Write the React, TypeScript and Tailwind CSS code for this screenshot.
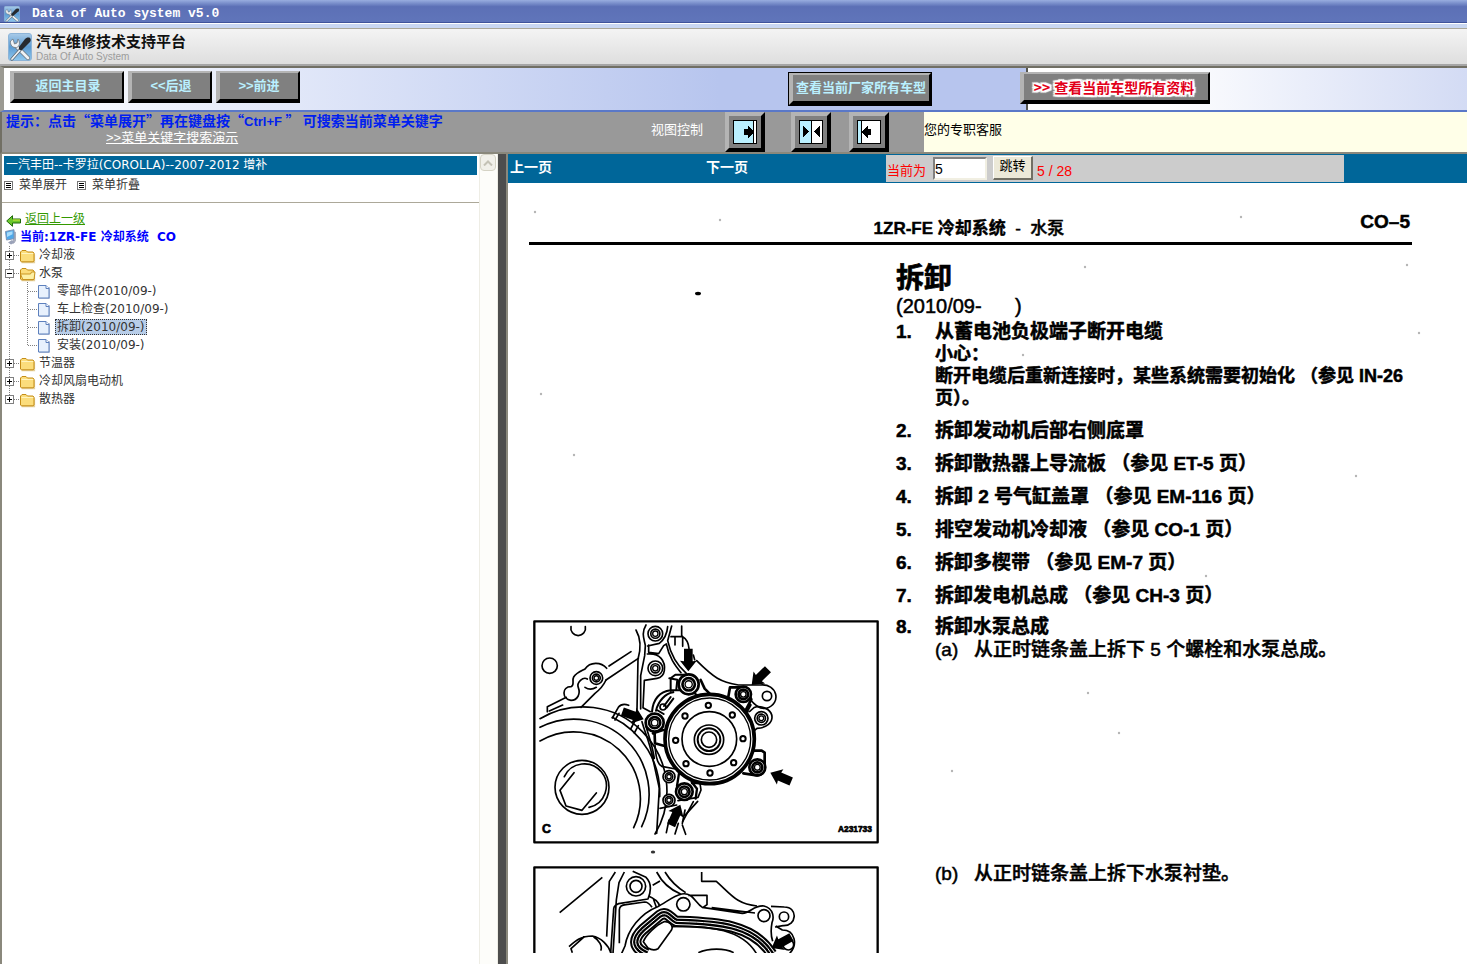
import React from "react";

const SANS = "font-['Liberation_Sans','Noto_Sans_CJK_SC',sans-serif]";
const TREE = "font-['DejaVu_Sans','Noto_Sans_CJK_SC',sans-serif]";

function ToolsLogo({ className }: { className: string }) {
  return (
    <svg viewBox="0 0 24 28" className={className} preserveAspectRatio="none" aria-hidden="true">
      <defs>
        <linearGradient id="tile" x1="0" y1="0" x2="0" y2="1">
          <stop offset="0" stopColor="#a9cbe9" />
          <stop offset="0.5" stopColor="#5c9bd2" />
          <stop offset="1" stopColor="#8fc8ee" />
        </linearGradient>
      </defs>
      <rect x="0.5" y="0.5" width="23" height="27" rx="2.5" fill="url(#tile)" stroke="#8db4d8" />
      <path d="M7 12 20 25" stroke="#6d7780" strokeWidth="4.2" strokeLinecap="round" />
      <path d="M7 12 20 25" stroke="#f1f3f5" strokeWidth="2.8" strokeLinecap="round" />
      <path d="M2.500 8c-.5 4 2 7 6 6.500 3-1 4-4.500 1.500-8.500L9 10l-2.500 1L5 6z" fill="#f1f3f5" stroke="#6d7780" strokeWidth="0.8" />
      <path d="M12 17 4 26" stroke="#59636d" strokeWidth="3.2" strokeLinecap="round" />
      <path d="M12 17 4 26" stroke="#eef2f5" strokeWidth="1.800" strokeLinecap="round" />
      <path d="M22 5c-2-1-4 0-5 1l-6 8c-1 2 1 4 3 3l8-8c1-1 1-3 0-4z" fill="#262a30" />
    </svg>
  );
}

function BevelButton({ children, className = "" }: { children: React.ReactNode; className?: string }) {
  return (
    <button
      type="button"
      className={`flex h-8 shrink-0 items-center justify-center border-t-2 border-r-2 border-b-4 border-l-4 border-t-[#b4b4b4] border-r-black border-b-black border-l-[#b4b4b4] bg-[#808080] text-[13px] leading-4 font-bold whitespace-nowrap text-[#baf0ff] ${className}`}
    >
      {children}
    </button>
  );
}

function ViewButton({ label, className = "", children }: { label: string; className?: string; children: React.ReactNode }) {
  return (
    <button
      type="button"
      aria-label={label}
      className={`flex h-10 w-10 shrink-0 items-center justify-center border-4 border-t-[#b4b4b4] border-r-black border-b-black border-l-[#b4b4b4] bg-[#808080] ${className}`}
    >
      <svg viewBox="0 0 24 24" className="h-6 w-6 shrink-0" shapeRendering="crispEdges">
        <rect x="0.5" y="0.5" width="23" height="23" fill="#fff" stroke="#000" />
        {children}
      </svg>
    </button>
  );
}

function Folder({ open }: { open: boolean }) {
  return (
    <g transform="translate(20 3)">
      <path d="M1 13.5 1 3.5 2.5 2h4L8 3.5h5.5L14.5 5v8.5z" fill="#c9a13a" transform="translate(0.6 0.8)" opacity="0.5" />
      <path d="M0.5 12V3L2 1.5h4L7.5 3H13l1 1.2V12l-.8.8H1.3z" fill="#fbdd7c" stroke="#c58d17" />
      {open ? (
        <path d="M0.5 7h10l1-2h3.5L14 12.5H2.8z" fill="#fdf0a5" stroke="#c58d17" strokeWidth="0.9" />
      ) : (
        <path d="M1.5 4.5h11.7" stroke="#fff4bf" />
      )}
    </g>
  );
}

type Node = { label: string; kind: "closed" | "open" | "leaf"; selected?: boolean; last?: boolean };

const NODES: Node[] = [
  { label: "冷却液", kind: "closed" },
  { label: "水泵", kind: "open" },
  { label: "零部件(2010/09-)", kind: "leaf" },
  { label: "车上检查(2010/09-)", kind: "leaf" },
  { label: "拆卸(2010/09-)", kind: "leaf", selected: true },
  { label: "安装(2010/09-)", kind: "leaf", last: true },
  { label: "节温器", kind: "closed" },
  { label: "冷却风扇电动机", kind: "closed" },
  { label: "散热器", kind: "closed", last: true },
];

function TreeRow({ node }: { node: Node }) {
  const leaf = node.kind === "leaf";
  const dots = { stroke: "#808080", strokeDasharray: "1 1", shapeRendering: "crispEdges" as const };
  return (
    <li className="flex h-[18px] items-center">
      <svg viewBox={leaf ? "0 0 55 18" : "0 0 37 18"} className={leaf ? "h-[18px] w-[55px] shrink-0" : "h-[18px] w-[37px] shrink-0"}>
        <path d={!leaf && node.last ? "M9.5 0V9" : "M9.5 0V18"} {...dots} />
        {leaf ? (
          <>
            <path d={node.last ? "M27.5 0V10" : "M27.5 0V18"} {...dots} />
            <path d="M28 9.5H38" {...dots} />
            <path d="M39 5h11v12h-11z" fill="#9aa7c4" opacity="0.6" />
            <path d="M38.5 3.5h7.5l3 3v9.5H38.5z" fill="#e8f1fd" stroke="#5d80bd" />
            <path d="M46 3.5v3h3" fill="#fff" stroke="#5d80bd" />
          </>
        ) : (
          <>
            <path d="M14 9.5H20" {...dots} />
            <rect x="5.5" y="5.5" width="8" height="8" fill="#fff" stroke="#808080" shapeRendering="crispEdges" />
            <path d={node.kind === "open" ? "M7 9.5h5" : "M7 9.5h5M9.5 7v5"} stroke="#000" shapeRendering="crispEdges" />
            <Folder open={node.kind === "open"} />
          </>
        )}
      </svg>
      <a
        href="#node"
        className={
          node.selected
            ? "border border-dotted border-[#333] bg-[#b8cde8] px-px leading-[14px] text-[#333]"
            : "px-0.5 leading-4 text-[#333]"
        }
      >
        {node.label}
      </a>
    </li>
  );
}

function MenuIcon() {
  return (
    <svg viewBox="0 0 9 9" className="h-[9px] w-[9px]" shapeRendering="crispEdges" aria-hidden="true">
      <rect x="0.5" y="0.5" width="8" height="8" fill="#fff" stroke="#777" />
      <path d="M2 2.5h5M2 4.5h5M2 6.5h5" stroke="#000" />
    </svg>
  );
}

function Bolt({ x, y, r, heavy }: { x: number; y: number; r: number; heavy?: boolean }) {
  return (
    <g strokeWidth={heavy ? 8 : 5}>
      <circle cx={x} cy={y} r={r} fill="#fff" />
      <circle cx={x} cy={y} r={r * 0.62} />
      <circle cx={x} cy={y} r={r * 0.36} strokeWidth="4" />
    </g>
  );
}

function Arrow({ x, y, angle }: { x: number; y: number; angle: number }) {
  return (
    <path
      d="M0 0-32-25-30-13H-68V13H-30L-32 25z"
      transform={`translate(${x} ${y}) rotate(${angle})`}
      fill="#000"
      stroke="none"
    />
  );
}

function PumpFigure() {
  const holes = [
    [550, 286], [622, 315], [654, 386], [626, 458], [555, 489], [483, 461], [452, 391], [480, 318],
  ];
  return (
    <svg viewBox="24 30 1038 672" className="block w-full" fill="none" stroke="#000" strokeWidth="5" strokeLinecap="round" strokeLinejoin="round" role="img" aria-label="水泵总成 A231733">
      <rect x="28" y="34" width="1030" height="663" strokeWidth="7" />
      <path d="M138 50a22 22 0 1 0 43 0" />
      <circle cx="74" cy="167" r="23" />
      <path d="M318 125 252 168M340 145 243 210" />
      <path d="M67 305V290L124 262M180 177c15-22 48-22 65-2M180 177c-16 8-27 12-34 24-6 10 4 25-8 29-28 0-28 37 0 41 20 0 29-20 22-38-6-15 14-34 27-26M243 210c-10 22-20 30-33 40L168 292M73 303l40-18M180 232c12 8 24 6 34 0" />
      <Bolt x={214} y={204} r={19} />
      <path d="M45 326A252 252 0 0 1 390 672M45 352A225 225 0 0 1 350 650M45 393A200 200 0 0 1 326 653M262 322A252 252 0 0 1 404 560" />
      <circle cx="171" cy="532" r="81" />
      <path d="M118 500A66 66 0 1 1 192 592M105 541l42-53M105 541l18 47 48 13 43-52" />
      <path d="M333 60c16 28 14 60 6 88l-3 150M363 45c-16 26-4 46-2 62l-2 30-12 60v100M428 50c-2 25-12 40-25 50l-35 8M440 48l-12 44c10 46 30 76 56 98M371 105v22l30 4 15-24 8-5c8 40 26 64 44 86M367 132c38-4 55 22 51 50-2 14-10 21-22 23l-38 6-4 82 22 12" />
      <Bolt x={391} y={71} r={22} />
      <Bolt x={391} y={175} r={22} />
      <path d="M438 80h32V48M450 80v25M473 80v29M473 80c14 8 18 22 19 36M505 135l4 14" />
      <path d="M515 152c52 52 72 64 125 73h66c50-6 66 55 18 70-20 4-36-11-50-29" />
      <circle cx="726" cy="258" r="14" />
      <path d="M672 305c6 0 10-15 24-15 58-1 62 62 0 65l-12 10" />
      <Bolt x={709} y={325} r={20} />
      <path d="M262 324l18-32c8-10 20-10 31-6M270 330l12-20M317 357l20-38M328 369l12-22M351 335c8 30 22 60 30 100l22 100-8 135M362 345c8 30 20 60 26 100" />
      <path d="M437 243V205l14-11h30M381 305c4-40 26-60 56-64h55c20 10 30 20 40 17M393 302c7-29 28-52 52-55M396 300l20 12M437 261l-20 27M445 266l-20 27M433 205l24 4-3 28" strokeWidth="6" />
      <circle cx="414" cy="291" r="9" />
      <path d="M527 210l12 26 15 15M610 260l5-28h45l19 36-16 31M676 285l-12 22M655 490l40 6c20 0 24-17 24-28v-40l-9-6h-28M388 350l2 50 26 7M384 370l30-10" strokeWidth="8" />
      <circle cx="554" cy="387" r="134" fill="#fff" strokeWidth="11" />
      <circle cx="554" cy="387" r="123" strokeWidth="4" />
      <circle cx="553" cy="387" r="82" />
      <circle cx="552" cy="389" r="44" />
      <circle cx="552" cy="389" r="34" strokeWidth="6" />
      <circle cx="552" cy="389" r="23" />
      {holes.map(([x, y]) => (
        <circle key={`${x}-${y}`} cx={x} cy={y} r="8" strokeWidth="6" />
      ))}
      <Bolt x={491} y={223} r={30} heavy />
      <Bolt x={389} y={338} r={27} heavy />
      <Bolt x={655} y={253} r={23} heavy />
      <Bolt x={697} y={472} r={24} heavy />
      <path d="M390 405c2 40 8 58 20 64l42 8M405 595l50-10M500 520h25l3 20-9 22-60 10M505 575l-32 60" />
      <path d="M462 490l-6 38 8 22M500 516l16 20-4 30" strokeWidth="7" />
      <Bolt x={432} y={500} r={18} />
      <Bolt x={432} y={571} r={18} />
      <Bolt x={478} y={545} r={25} heavy />
      <path d="M432 630l-8 38M460 640l-10 32M472 645l10 28M480 600l-8 40M518 574l-38 42" />
      <Arrow x={490} y={184} angle={90} />
      <Arrow x={680} y={225} angle={136} />
      <Arrow x={356} y={328} angle={20} />
      <Arrow x={736} y={488} angle={203} />
      <Arrow x={466} y={584} angle={-66} />
      <g fill="#000" stroke="#000" strokeWidth="2" className="font-['Liberation_Sans',sans-serif] font-bold">
        <text x="51" y="670" fontSize="37">C</text>
        <text x="939" y="667" fontSize="25">A231733</text>
      </g>
    </svg>
  );
}

function GasketFigure() {
  return (
    <svg viewBox="24 768 1038 262" className="block w-full" fill="none" stroke="#000" strokeWidth="5" strokeLinejoin="round" role="img" aria-label="水泵衬垫">
      <path d="M28 1032V772H1058V1032" strokeWidth="7" />
      <path d="M104 908 232 802M271 786l-18 28-8 166M298 786l-16 32-8 52-10 160M323 784l40 18c20 20 12 50 6 65l-88 14c-20 6-14 20-16 30l-8 118M370 858c20 8 30 15 34 30M385 866l9 26M383 826l22-13M395 786c18 35 45 55 72 66M420 786c18 30 38 47 62 62M530 786v28h44c45 40 60 68 122 74" />
      <circle cx="333" cy="829" r="29" />
      <circle cx="333" cy="829" r="18" />
      <path d="M470 852c-26 6-48 26-72 38-52 20-90 70-98 118l-10 22M283 1000V900c0-10 8-15 20-16l56-8c10 0 18 10 22 16M470 852c34-6 40 26 62 40l120 18c26-2 34-25 65-22 30 8 30 36 24 50-4 22-4 38 2 56M490 856h56v28l-14 10M560 893l130 16" />
      <circle cx="475" cy="883" r="20" />
      <circle cx="717" cy="917" r="18" />
      <path d="M738 889l40 2c42 0 38 58-4 56l-24 4M752 948l20 12c40 0 46 46 22 70" />
      <circle cx="777" cy="920" r="14" />
      <circle cx="790" cy="1004" r="16" />
      <path d="M366 1032c-46-20-40-48-12-74l50-42c22-16 34 12 50 18 106 4 228 4 286 98" strokeWidth="34" />
      <path d="M366 1032c-46-20-40-48-12-74l50-42c22-16 34 12 50 18 106 4 228 4 286 98" stroke="#fff" strokeWidth="22" />
      <path d="M366 1032c-46-20-40-48-12-74l50-42c22-16 34 12 50 18 106 4 228 4 286 98" strokeWidth="16" />
      <path d="M366 1032c-46-20-40-48-12-74l50-42c22-16 34 12 50 18 106 4 228 4 286 98" stroke="#fff" strokeWidth="3" />
      <path d="M355 995c8-20 38-50 62-60 16-2 30 12 22 26l-40 55c-10 6-20 4-30-2zM440 950c120-4 212 10 254 80M520 1028c30-14 80-14 106 0" />
      <path d="M132 1010c20-18 36-32 70-32 26 4 50 30 56 52M142 1028l-4-12 40-36M205 980c18 10 28 30 22 42" />
      <Arrow x={740} y={1014} angle={151} />
    </svg>
  );
}

function Step({ n, className = "", children }: { n: number; className?: string; children: React.ReactNode }) {
  return (
    <li className={`flex text-[19px] leading-[23px] [-webkit-text-stroke:0.5px_#000] ${className}`}>
      <span className="w-[39px] shrink-0">{n}.</span>
      <div>{children}</div>
    </li>
  );
}

function Specks() {
  const faint = [
    [212, 37], [27, 29], [733, 34], [577, 84], [899, 82], [33, 211], [66, 272], [848, 293], [698, 393], [611, 550], [580, 510], [444, 588], [911, 150], [515, 172],
  ];
  return (
    <svg className="pointer-events-none absolute top-0 left-0 h-full w-full" aria-hidden="true">
      <ellipse cx="190" cy="110.500" rx="3" ry="1.800" fill="#000" />
      <ellipse cx="145" cy="669" rx="2.200" ry="1.600" fill="#333" />
      {faint.map(([x, y]) => (
        <circle key={`${x}-${y}`} cx={x} cy={y} r="1.200" fill="#b5b5b5" />
      ))}
    </svg>
  );
}

export default function App() {
  return (
    <div className={`flex h-screen flex-col overflow-hidden bg-white text-[13px] ${SANS}`}>
      <div className="flex h-[23px] shrink-0 items-center gap-3 border-b border-[#3f539b] bg-linear-to-b from-[#98addf] via-[#5c70b6] via-30% to-[#6075ba] pt-1.5 pl-1">
        <ToolsLogo className="h-4 w-4" />
        <span className="font-['Liberation_Mono',monospace] text-[13px] leading-4 font-bold text-white">Data of Auto system v5.0</span>
      </div>
      <div className="h-[5px] shrink-0 border-t border-white bg-[#c9d7f2]" />

      <header className="flex h-[38px] shrink-0 items-center gap-1 border-t border-b-2 border-t-[#aca899] border-b-[#a5a5a5] bg-linear-to-b from-[#f4f4f4] to-[#dedede] pl-2">
        <ToolsLogo className="h-7 w-6" />
        <div className="pt-0.5">
          <h1 className="text-[15px] leading-[18px] font-bold text-[#111]">汽车维修技术支持平台</h1>
          <p className="text-[10px] leading-3 text-[#9c9c9c]">Data Of Auto System</p>
        </div>
      </header>

      <div className="flex h-[46px] shrink-0 border-t-2 border-b-2 border-l-4 border-t-[#716f64] border-b-[#5a78c8] border-l-[#9b9a92]">
        <nav className="flex w-[70%] gap-1 border-r-2 border-[#55554e] bg-linear-to-r from-white via-[#b7c5ee] via-70% to-[#b7c5ee] pt-[3px] pl-1.5">
          <BevelButton className="w-[114px]">返回主目录</BevelButton>
          <BevelButton className="w-[84px]">&lt;&lt;后退</BevelButton>
          <BevelButton className="w-[84px]">&gt;&gt;前进</BevelButton>
          <BevelButton className="mt-0.5 mr-[95px] ml-auto w-[142px] outline outline-black">查看当前厂家所有车型</BevelButton>
        </nav>
        <div className="flex flex-1 bg-linear-to-r from-white from-30% to-[#d3dbf4] pt-1">
          <BevelButton className="-ml-2 w-[190px]">
            <span className="flex gap-1 pr-1 font-['Noto_Sans_CJK_SC',sans-serif] text-[14px] text-[#e2001a] [text-shadow:-1px_-1px_1px_#fff,1px_-1px_1px_#fff,-1px_1px_1px_#fff,1px_1px_1px_#fff,0_-2px_1px_#fff,0_2px_1px_#fff,2px_0_1px_#fff,-2px_0_1px_#fff,2px_2px_1px_#fff,-2px_-2px_1px_#fff,2px_-2px_1px_#fff,-2px_2px_1px_#fff]">
              <span>&gt;&gt;</span>
              <span>查看当前车型所有资料</span>
            </span>
          </BevelButton>
        </div>
      </div>

      <div className="flex h-[42px] shrink-0 border-b-2 border-l-2 border-b-[#8a887c] border-l-[#716f64]">
        <div className="flex w-[63%] bg-[#999]">
          <div className="pl-1">
            <p className="h-4 font-['Noto_Sans_CJK_SC',sans-serif] text-[14px] leading-4 font-bold whitespace-pre text-[#0020f0]">
              提示：点击“菜单展开”再在键盘按“<span className={`text-[13px] ${SANS}`}>Ctrl+F </span>” 可搜索当前菜单关键字
            </p>
            <a href="#demo" className="ml-[100px] text-[13px] leading-4 text-white underline">&gt;&gt;菜单关键字搜索演示</a>
          </div>
          <span className="mr-[22px] ml-auto pt-2.5 leading-4 text-white">视图控制</span>
          <ViewButton label="展开菜单" className="mr-[26px]">
            <path d="M1 1h19v22H1z" fill="#baf0ff" />
            <path d="M20.5 1v22" stroke="#000" />
            <path d="M11 9h4V6h1v1h1v1h1v1h1v1h1v4h-1v1h-1v1h-1v1h-1v1h-1v-3h-4z" fill="#000" />
          </ViewButton>
          <ViewButton label="并排显示" className="mr-[18px]">
            <path d="M1 1h11v22H1z" fill="#baf0ff" />
            <path d="M12.500 1v22" stroke="#000" />
            <path d="M4 6h1v1h1v1h1v1h1v1h1v1h1v1h-1v1h-1v1h-1v1h-1v1h-1v1H4zM21 6h-1v1h-1v1h-1v1h-1v1h-1v1h-1v1h1v1h1v1h1v1h1v1h1v1h1z" fill="#000" />
          </ViewButton>
          <ViewButton label="收起菜单" className="mr-9">
            <path d="M1 1h3v22H1z" fill="#baf0ff" />
            <path d="M4.500 1v22" stroke="#000" />
            <path d="M14 9h-3V6h-1v1H9v1H8v1H7v1H6v1H5v2h1v1h1v1h1v1h1v1h1v1h1v-3h3z" fill="#000" />
          </ViewButton>
        </div>
        <div className="-ml-px flex-1 bg-[#ffffe8] pt-2.5 leading-4 text-black">您的专职客服</div>
      </div>

      <div className="flex min-h-0 flex-1">
        <aside className={`flex w-[498px] shrink-0 border-l-2 border-[#8a887c] text-[12px] ${TREE}`}>
          <div className="min-w-0 flex-1">
            <h2 className="mt-0.5 mr-0.5 ml-0.5 h-[19px] bg-[#069] pl-0.5 leading-[18px] text-white">一汽丰田--卡罗拉(COROLLA)--2007-2012 增补</h2>
            <div className="flex h-7 gap-2.5 border-b border-[#aca899] pt-0.5 pl-0.5">
              <button type="button" className="flex h-4 items-center gap-1.5 text-[#333]"><MenuIcon />菜单展开</button>
              <button type="button" className="flex h-4 items-center gap-1.5 text-[#333]"><MenuIcon />菜单折叠</button>
            </div>
            <div className="pt-[7px]">
              <a href="#up" className="flex h-[18px] items-center gap-1 pl-1 text-[#339900]">
                <svg viewBox="0 0 15 12" className="mt-1 h-3 w-[15px]" aria-hidden="true">
                  <path d="M.7 6 6.500.700V4h8v4h-8v3.300z" fill="#6cc72c" stroke="#1f6b0a" />
                  <path d="M7 5h7" stroke="#d8e93c" />
                </svg>
                <span className="underline">返回上一级</span>
              </a>
              <div className="flex h-[18px] items-center gap-[3px] pl-[3px] font-bold text-[#00f]">
                <svg viewBox="0 0 12 16" className="h-4 w-3" aria-hidden="true">
                  <path d="M8 2 11 3v9l-3 3z" fill="#a9aebc" />
                  <path d="M.5 2.500 9 .700v9L1.500 11z" fill="#4ea9ea" stroke="#7d93b5" />
                  <path d="M2 3.500 7.500 2.300v3L2 8z" fill="#a7dcfb" />
                  <path d="M3 13.500 7 11l3 2.500L6 15.500z" fill="#9aa2b8" />
                </svg>
                <span className="leading-4 whitespace-pre">当前:1ZR-FE 冷却系统  CO</span>
              </div>
              <ul className="-ml-0.5">
                {NODES.map((node) => (
                  <TreeRow key={node.label} node={node} />
                ))}
              </ul>
            </div>
          </div>
          <div className="w-[19px] border-r border-l border-[#eeede5] bg-[#fdfdfa]">
            <button type="button" aria-label="向上滚动" className="flex h-[17px] w-4 items-center justify-center rounded-sm border border-[#d5d3c5] bg-[#f1f0ea]">
              <svg viewBox="0 0 10 6" className="h-1.5 w-2.5" fill="none" stroke="#c4c2b6" strokeWidth="2"><path d="m1 5.500 4-4 4 4" /></svg>
            </button>
          </div>
        </aside>
        <div className="w-2 shrink-0 bg-[#4d4d4d]" />

        <main className="min-w-0 flex-1 overflow-hidden border-l-2 border-[#8a887c]">
          <div className="flex h-[29px] bg-[#069] text-white">
            <div className="flex w-[378px] shrink-0 pt-[5px] pl-0.5 text-[14px] leading-4 font-bold">
              <a href="#prev" className="w-[196px]">上一页</a>
              <a href="#next">下一页</a>
            </div>
            <form className="my-px flex w-[458px] items-start bg-[#ccc] text-[#f00]" onSubmit={(e) => e.preventDefault()}>
              <label htmlFor="page" className="w-[47px] pt-2 pl-px leading-4">当前为</label>
              <input id="page" defaultValue="5" className="mt-0.5 h-[23px] w-[54px] border-2 border-t-[#808080] border-r-[#f1efe2] border-b-[#f1efe2] border-l-[#808080] bg-white text-[14px] text-black" />
              <button type="submit" className="mt-px ml-1.5 h-6 w-10 border border-t-white border-r-2 border-r-[#716f64] border-b-2 border-b-[#716f64] border-l-white bg-[#ece9d8] pb-1 leading-4 text-black">跳转</button>
              <span className="pt-2 pl-1 text-[14px] leading-4">5 / 28</span>
            </form>
          </div>

          <article className="relative pr-[55px] pl-[21px] font-bold text-black">
            <Specks />
            <div className="flex h-[62px] items-end justify-end border-b-[3px] border-black">
              <h2 className="mr-[296px] pb-[3px] text-[17px] leading-5 whitespace-pre [-webkit-text-stroke:0.4px_#000]">1ZR-FE 冷却系统  <span className="font-medium">-  水泵</span></h2>
              <span className="pr-0.5 pb-2.5 text-[19px] leading-5 [-webkit-text-stroke:0.5px_#000]">CO–5</span>
            </div>
            <div className="grid grid-cols-[346px_1fr] gap-x-[17px] pl-1">
              <div className="col-start-2 pt-[18px]">
                <h3 className="text-[28px] leading-8 [-webkit-text-stroke:0.7px_#000]">拆卸</h3>
                <p className="text-[20px] leading-[22px] font-normal whitespace-pre [-webkit-text-stroke:0.5px_#000]">(2010/09-      )</p>
                <ol className="pt-[3px]">
                  <Step n={1}>
                    <p>从蓄电池负极端子断开电缆</p>
                    <p className="text-[18px] leading-[22px]">小心：</p>
                    <p className="text-[18px] leading-[22px] whitespace-nowrap">断开电缆后重新连接时，某些系统需要初始化 （参见 IN-26</p>
                    <p className="text-[18px] leading-[22px]">页）。</p>
                  </Step>
                  <Step n={2} className="mt-2.5">拆卸发动机后部右侧底罩</Step>
                  <Step n={3} className="mt-2.5">拆卸散热器上导流板 （参见 ET-5 页）</Step>
                  <Step n={4} className="mt-2.5">拆卸 2 号气缸盖罩 （参见 EM-116 页）</Step>
                  <Step n={5} className="mt-2.5">排空发动机冷却液 （参见 CO-1 页）</Step>
                  <Step n={6} className="mt-2.5">拆卸多楔带 （参见 EM-7 页）</Step>
                  <Step n={7} className="mt-2.5">拆卸发电机总成 （参见 CH-3 页）</Step>
                </ol>
              </div>
              <div className="pt-[13px]"><PumpFigure /></div>
              <ol className="pt-2">
                <Step n={8}>
                  <p>拆卸水泵总成</p>
                  <p className="flex font-medium"><span className="w-[39px]">(a)</span>从正时链条盖上拆下 5 个螺栓和水泵总成。</p>
                </Step>
              </ol>
              <div className="pt-[22px]"><GasketFigure /></div>
              <p className="flex pt-[18px] pl-[39px] text-[19px] leading-[23px] font-medium [-webkit-text-stroke:0.5px_#000]"><span className="w-[39px]">(b)</span>从正时链条盖上拆下水泵衬垫。</p>
            </div>
          </article>
        </main>
      </div>
    </div>
  );
}
